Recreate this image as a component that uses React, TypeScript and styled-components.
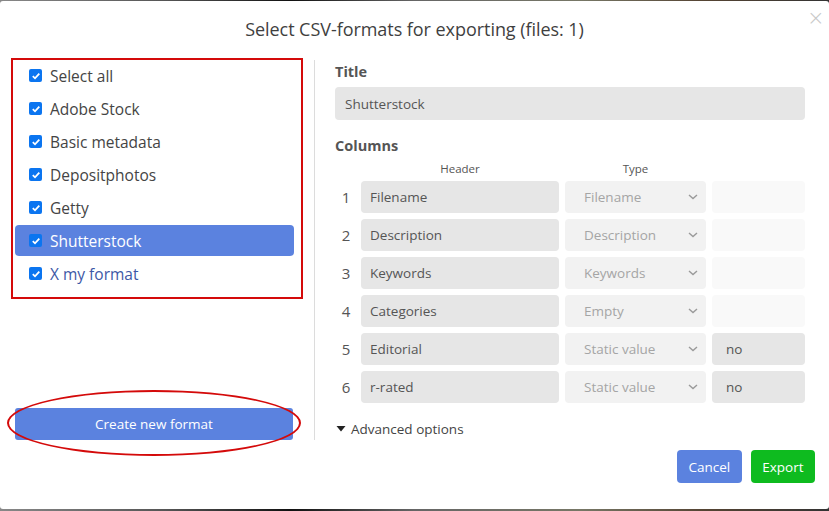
import React from "react";
import styled, { createGlobalStyle } from "styled-components";

const Global = createGlobalStyle`
  html, body { margin: 0; padding: 0; }
  body {
    width: 829px; height: 511px; overflow: hidden;
    background: linear-gradient(90deg, #888 0%, #555 20%, #111 35%, #666 50%, #776 70%, #543 85%, #333 100%);
    font-family: "Open Sans", "Noto Sans", sans-serif;
  }
  * { box-sizing: border-box; }
`;

const Modal = styled.div`
  margin-top: 1px;
  width: 829px;
  height: 508px;
  background: #fff;
  border-radius: 3px;
  display: flex;
  flex-direction: column;
  position: relative;
`;

const Header = styled.div`
  height: 57px;
  display: flex;
  align-items: center;
  justify-content: center;
  padding-bottom: 1px;
`;

const Heading = styled.h1`
  margin: 0;
  font-size: 18px;
  font-weight: 400;
  color: #3f3f3f;
  letter-spacing: -0.05px;
`;

const Close = styled.button`
  position: absolute;
  top: 8px;
  right: 8px;
  border: 0;
  background: none;
  color: #c8c8c8;
  font-size: 21px;
  font-family: "DejaVu Sans", sans-serif;
  font-weight: 300;
  padding: 0;
  width: 14px;
  height: 18px;
  line-height: 18px;
`;

const Body = styled.div`
  display: flex;
  padding: 0 24px 0 11px;
`;

const LeftCol = styled.div`
  width: 293px;
  height: 382px;
  display: flex;
  flex-direction: column;
  justify-content: space-between;
`;

const RedBox = styled.div`
  border: 2px solid #d40a0a;
  height: 241px;
  padding: 0 7px 0 2px;
  display: flex;
  flex-direction: column;
  gap: 2px;
`;

const Item = styled.div<{ $active?: boolean; $custom?: boolean }>`
  height: 31px;
  display: flex;
  align-items: center;
  gap: 8px;
  padding-left: 14px;
  border-radius: 4px;
  font-size: 15.5px;
  background: ${(p) => (p.$active ? "#5b82df" : "transparent")};
  color: ${(p) => (p.$active ? "#fff" : p.$custom ? "#3d58a6" : "#444")};
`;

const Box = styled.span`
  width: 13px;
  height: 13px;
  border-radius: 2px;
  background: #0b75f0;
  display: inline-flex;
  align-items: center;
  justify-content: center;
  flex: none;
`;

const ButtonWrap = styled.div`
  position: relative;
  margin-left: 4px;
  margin-right: -4px;
  width: 278px;
`;

const Ellipse = styled.div`
  position: absolute;
  left: -8px;
  right: -8px;
  top: -18px;
  bottom: -16px;
  border: 2px solid #d40a0a;
  border-radius: 50%;
  pointer-events: none;
`;

const Btn = styled.button<{ $green?: boolean }>`
  border: 0;
  border-radius: 4px;
  background: ${(p) => (p.$green ? "#0ebb1f" : "#5b82df")};
  color: #fff;
  font-family: inherit;
  font-size: 13.5px;
  height: 33px;
  padding: 0 11.5px;
`;

const WideBtn = styled(Btn)`
  width: 278px;
  height: 32px;
  border-radius: 3px;
  font-size: 13.5px;
`;

const Divider = styled.div`
  width: 1px;
  background: #dcdcdc;
  margin-left: 11px;
  margin-top: 2px;
  height: 380px;
`;

const RightCol = styled.div`
  flex: 1;
  padding-left: 20px;
  display: flex;
  flex-direction: column;
`;

const Label = styled.div<{ $mt?: number }>`
  font-weight: 700;
  font-size: 14.5px;
  color: #555;
  margin-top: ${(p) => p.$mt ?? 0}px;
  line-height: 20px;
`;

const Field = styled.div<{ $tone?: "dark" | "mid" | "light" }>`
  height: 32px;
  border-radius: 4px;
  background: ${(p) =>
    p.$tone === "mid" ? "#f2f2f2" : p.$tone === "light" ? "#f9f9f9" : "#e6e6e6"};
  display: flex;
  align-items: center;
  font-size: 13.5px;
  color: #555;
  padding-left: 9px;
`;

const TitleField = styled(Field)`
  margin-top: 5px;
  height: 33px;
  padding-left: 10px;
`;

const Grid = styled.div`
  display: grid;
  grid-template-columns: 20px 198px 141px 93px;
  column-gap: 6px;
  row-gap: 6px;
  margin-top: 6px;
`;

const ColHead = styled.div`
  font-size: 11.5px;
  color: #555;
  text-align: center;
  line-height: 14px;
  margin-bottom: -1px;
`;

const Num = styled.div`
  font-size: 15px;
  color: #555;
  display: flex;
  align-items: center;
  justify-content: center;
  padding-left: 2px;
`;

const SelectField = styled(Field)`
  color: #a5a5a5;
  padding-left: 19px;
  padding-right: 8px;
  justify-content: space-between;
`;

const ValueField = styled(Field)`
  padding-left: 14px;
`;

const Advanced = styled.div`
  margin-top: 17px;
  display: flex;
  align-items: center;
  gap: 5px;
  font-size: 13.5px;
  color: #444;
  padding-left: 1px;
`;

const Footer = styled.div`
  display: flex;
  justify-content: flex-end;
  gap: 9px;
  padding: 10px 14px 0 0;
`;

const Check = () => (
  <Box>
    <svg width="10" height="10" viewBox="0 0 10 10">
      <path d="M1.8 5.2 L4 7.3 L8.3 2.6" stroke="#fff" strokeWidth="1.8" fill="none" />
    </svg>
  </Box>
);

const Chevron = () => (
  <svg width="10" height="6" viewBox="0 0 10 6">
    <path d="M1 1 L5 4.6 L9 1" stroke="#9a9a9a" strokeWidth="1.4" fill="none" />
  </svg>
);

const formats = [
  { name: "Select all" },
  { name: "Adobe Stock" },
  { name: "Basic metadata" },
  { name: "Depositphotos" },
  { name: "Getty" },
  { name: "Shutterstock", active: true },
  { name: "X my format", custom: true },
];

const rows = [
  { h: "Filename", t: "Filename", v: null },
  { h: "Description", t: "Description", v: null },
  { h: "Keywords", t: "Keywords", v: null },
  { h: "Categories", t: "Empty", v: null },
  { h: "Editorial", t: "Static value", v: "no" },
  { h: "r-rated", t: "Static value", v: "no" },
];

export default function App() {
  return (
    <>
      <Global />
      <Modal>
        <Header>
          <Heading>Select CSV-formats for exporting (files: 1)</Heading>
        </Header>
        <Close>×</Close>
        <Body>
          <LeftCol>
            <RedBox>
              {formats.map((f) => (
                <Item key={f.name} $active={f.active} $custom={f.custom}>
                  <Check />
                  {f.name}
                </Item>
              ))}
            </RedBox>
            <ButtonWrap>
              <WideBtn>Create new format</WideBtn>
              <Ellipse />
            </ButtonWrap>
          </LeftCol>
          <Divider />
          <RightCol>
            <Label $mt={4}>Title</Label>
            <TitleField>Shutterstock</TitleField>
            <Label $mt={16}>Columns</Label>
            <Grid>
              <span />
              <ColHead>Header</ColHead>
              <ColHead>Type</ColHead>
              <span />
              {rows.map((r, i) => (
                <React.Fragment key={r.h}>
                  <Num>{i + 1}</Num>
                  <Field>{r.h}</Field>
                  <SelectField $tone="mid">
                    {r.t}
                    <Chevron />
                  </SelectField>
                  {r.v ? <ValueField>{r.v}</ValueField> : <Field $tone="light" />}
                </React.Fragment>
              ))}
            </Grid>
            <Advanced>
              <svg width="10" height="8" viewBox="0 0 10 8">
                <path d="M0.5 1 L9.5 1 L5 6.5 Z" fill="#222" />
              </svg>
              Advanced options
            </Advanced>
          </RightCol>
        </Body>
        <Footer>
          <Btn>Cancel</Btn>
          <Btn $green>Export</Btn>
        </Footer>
      </Modal>
    </>
  );
}
